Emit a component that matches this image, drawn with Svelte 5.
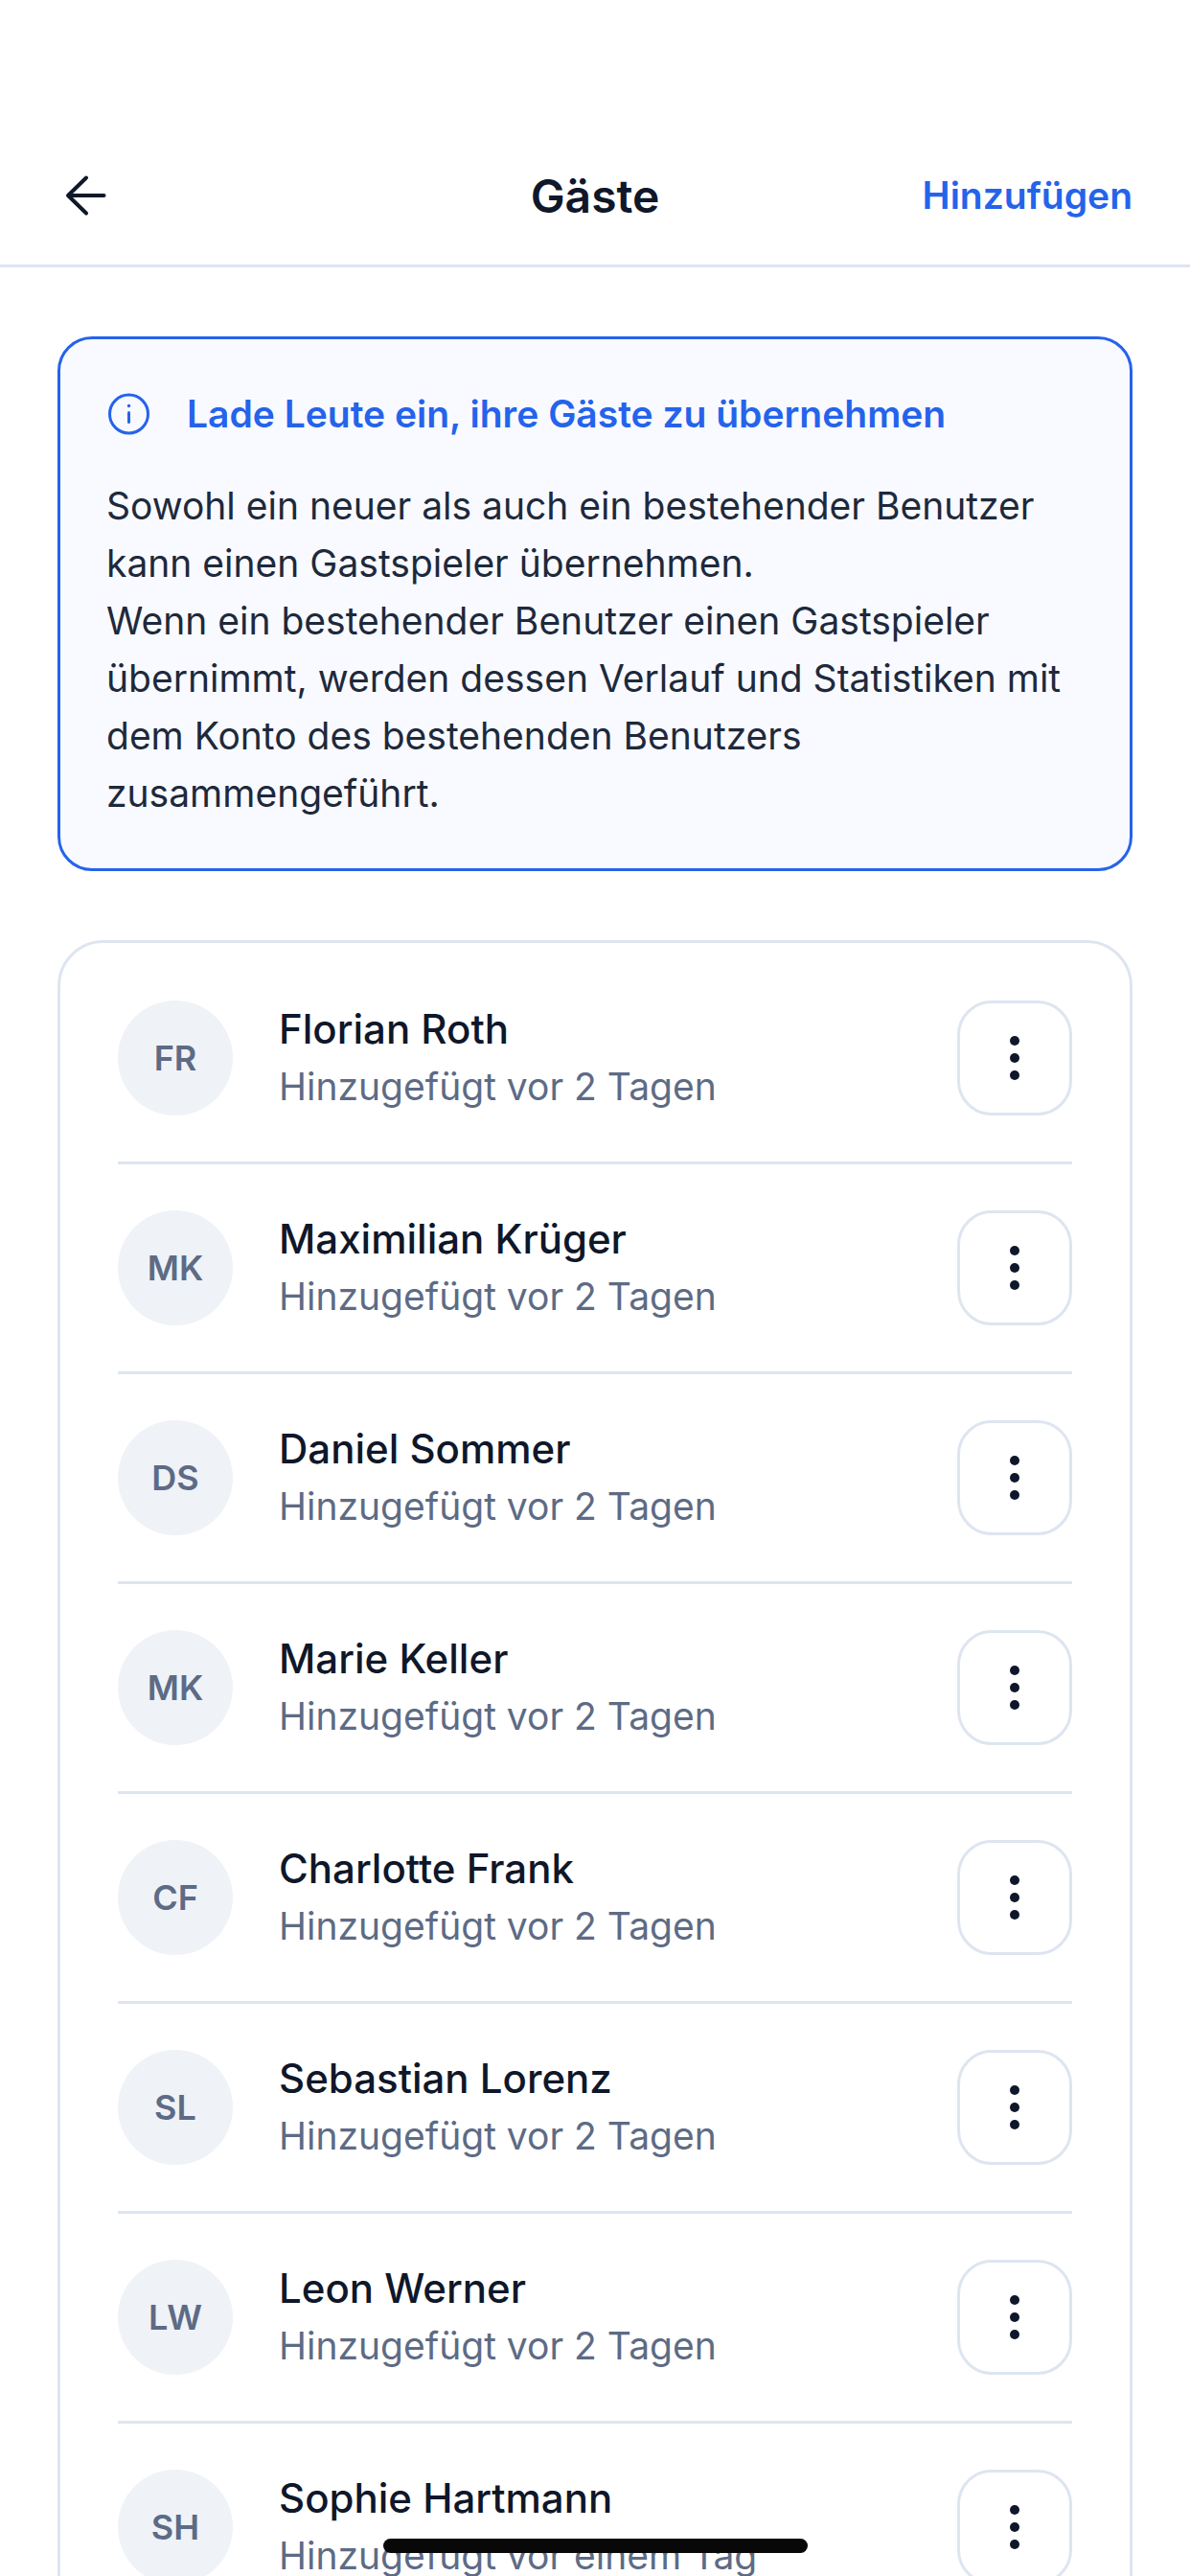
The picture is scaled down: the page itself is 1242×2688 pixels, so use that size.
<script>
  const guests = [
    { initials: 'FR', name: 'Florian Roth', added: 'Hinzugefügt vor 2 Tagen' },
    { initials: 'MK', name: 'Maximilian Krüger', added: 'Hinzugefügt vor 2 Tagen' },
    { initials: 'DS', name: 'Daniel Sommer', added: 'Hinzugefügt vor 2 Tagen' },
    { initials: 'MK', name: 'Marie Keller', added: 'Hinzugefügt vor 2 Tagen' },
    { initials: 'CF', name: 'Charlotte Frank', added: 'Hinzugefügt vor 2 Tagen' },
    { initials: 'SL', name: 'Sebastian Lorenz', added: 'Hinzugefügt vor 2 Tagen' },
    { initials: 'LW', name: 'Leon Werner', added: 'Hinzugefügt vor 2 Tagen' },
    { initials: 'SH', name: 'Sophie Hartmann', added: 'Hinzugefügt vor einem Tag' }
  ];
</script>

<div class="screen">
  <header class="topbar">
    <button class="back" aria-label="Zurück">
      <svg width="48" height="48" viewBox="0 0 48 48" fill="none" stroke="#0f172a" stroke-width="4" stroke-linecap="round" stroke-linejoin="round">
        <path d="M43.5 24H6M25 5.5 6 24l19 18.5" />
      </svg>
    </button>
    <h1>Gäste</h1>
    <span class="add">Hinzufügen</span>
  </header>

  <main class="content">
    <section class="notice">
      <div class="notice-head">
        <svg width="48" height="48" viewBox="0 0 48 48" fill="none" stroke="#2563eb" stroke-width="3" stroke-linecap="round">
          <circle cx="23.5" cy="24" r="20" />
          <path d="M23.5 22.5v10" />
          <circle cx="23.5" cy="15.5" r="1" fill="#2563eb" stroke-width="1.5" />
        </svg>
        <h2>Lade Leute ein, ihre Gäste zu übernehmen</h2>
      </div>
      <p>Sowohl ein neuer als auch ein bestehender Benutzer kann einen Gastspieler übernehmen.<br />Wenn ein bestehender Benutzer einen Gastspieler übernimmt, werden dessen Verlauf und Statistiken mit dem Konto des bestehenden Benutzers zusammengeführt.</p>
    </section>

    <section class="list">
      {#each guests as guest}
        <div class="row">
          <div class="avatar">{guest.initials}</div>
          <div class="info">
            <div class="name">{guest.name}</div>
            <div class="added">{guest.added}</div>
          </div>
          <button class="more" aria-label="Mehr">
            <i></i><i></i><i></i>
          </button>
        </div>
      {/each}
    </section>
  </main>

  <div class="home-bar"></div>
</div>

<style>
  :global(body) {
    margin: 0;
    background: #fff;
  }

  .screen {
    position: relative;
    width: 1242px;
    height: 2688px;
    overflow: hidden;
    background: #fff;
    font-family: Inter, "Liberation Sans", sans-serif;
    color: #0f172a;
  }

  .topbar {
    display: flex;
    align-items: center;
    justify-content: space-between;
    position: relative;
    box-sizing: border-box;
    height: 279px;
    padding: 132px 60px 0 65px;
    border-bottom: 3px solid #dde5f0;
  }

  .back {
    display: flex;
    padding: 0;
    border: 0;
    background: none;
  }

  h1 {
    position: absolute;
    left: 0;
    right: 0;
    bottom: 41px;
    margin: 0;
    text-align: center;
    font-size: 48px;
    line-height: 60px;
    font-weight: 600;
  }

  .add {
    color: #2563eb;
    font-size: 39px;
    line-height: 60px;
    font-weight: 600;
  }

  .content {
    display: flex;
    flex-direction: column;
    gap: 72px;
    padding: 72px 60px 0;
  }

  .notice {
    box-sizing: border-box;
    height: 558px;
    padding: 48px 48px 0;
    border: 3px solid #2563eb;
    border-radius: 36px;
    background: #f8faff;
  }

  .notice-head {
    display: flex;
    align-items: center;
    gap: 36px;
    margin-bottom: 36px;
  }

  h2 {
    margin: 0;
    color: #2563eb;
    font-size: 39px;
    line-height: 60px;
    font-weight: 600;
  }

  .notice p {
    margin: 0;
    font-size: 39px;
    line-height: 60px;
    color: #1e293b;
  }

  .list {
    padding: 60px 60px 0;
    border: 3px solid #dde5f0;
    border-radius: 48px;
  }

  .row {
    display: flex;
    align-items: center;
    gap: 48px;
    padding-bottom: 48px;
    margin-bottom: 48px;
    border-bottom: 3px solid #dde5f0;
  }

  .avatar {
    display: flex;
    flex: none;
    align-items: center;
    justify-content: center;
    width: 120px;
    height: 120px;
    border-radius: 50%;
    background: #eff2f7;
    color: #5d6b85;
    font-size: 36px;
    font-weight: 600;
  }

  .info {
    flex: 1;
    min-width: 0;
  }

  .name {
    font-size: 42px;
    line-height: 60px;
    font-weight: 500;
  }

  .added {
    color: #5d6b85;
    font-size: 39px;
    line-height: 60px;
  }

  .more {
    display: flex;
    flex: none;
    flex-direction: column;
    align-items: center;
    justify-content: center;
    gap: 8px;
    box-sizing: border-box;
    width: 120px;
    height: 120px;
    padding: 0;
    border: 3px solid #dde5f0;
    border-radius: 36px;
    background: #fff;
  }

  .more i {
    display: block;
    width: 10px;
    height: 10px;
    border-radius: 50%;
    background: #0f172a;
  }

  .home-bar {
    position: absolute;
    left: 400px;
    top: 2649px;
    width: 443px;
    height: 15px;
    border-radius: 8px;
    background: #080808;
  }
</style>
